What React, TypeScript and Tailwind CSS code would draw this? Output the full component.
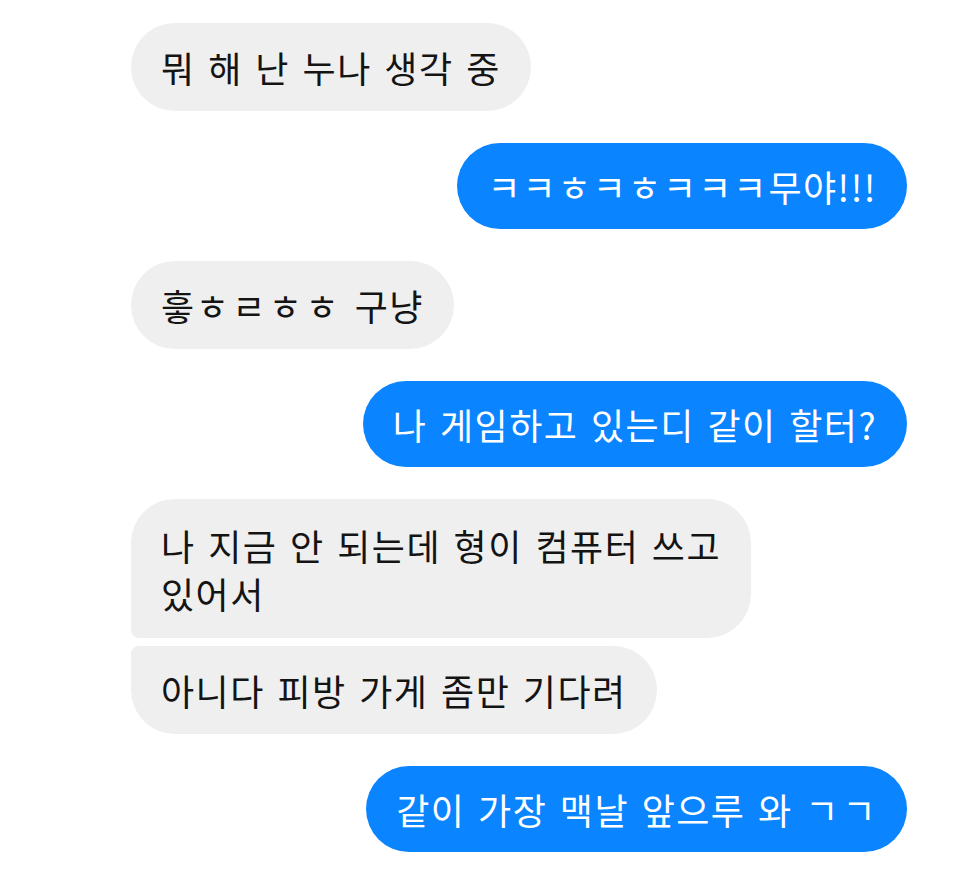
import React from "react";

type Msg = { text: React.ReactNode; me: boolean; shape?: string; pad?: string; gap?: string };

const J = ({ children, t }: { children: React.ReactNode; t: string }) => <span className={t}>{children}</span>;

const msgs: Msg[] = [
  { text: "뭐 해 난 누나 생각 중", me: false, gap: "mt-0" },
  {
    text: (
      <>
        <J t="tracking-[2px]">ㅋㅋㅎㅋㅎㅋㅋㅋ</J>무야!!!
      </>
    ),
    me: true,
    gap: "mt-[32px]",
  },
  {
    text: (
      <>
        흫<J t="tracking-[3.5px]">ㅎㄹㅎㅎ</J> 구냥
      </>
    ),
    me: false,
    gap: "mt-[32px]",
  },
  { text: "나 게임하고 있는디 같이 할터?", me: true, gap: "mt-[32px]" },
  {
    text: (
      <>
        나 지금 안 되는데 형이 컴퓨터 쓰고
        <br />
        있어서
      </>
    ),
    me: false,
    shape: "rounded-tl-[44px] rounded-tr-[44px] rounded-br-[44px] rounded-bl-[8px]",
    pad: "pt-[22px] pb-[21px]",
    gap: "mt-[32px]",
  },
  {
    text: "아니다 피방 가게 좀만 기다려",
    me: false,
    shape: "rounded-tl-[8px] rounded-tr-[44px] rounded-br-[44px] rounded-bl-[44px]",
    gap: "mt-[8px]",
  },
  {
    text: (
      <>
        같이 가장 맥날 앞으루 와 <J t="tracking-[4px]">ㄱ</J>ㄱ
      </>
    ),
    me: true,
    gap: "mt-[32px]",
  },
];

export default function App() {
  return (
    <div
      className="w-[960px] h-[878px] bg-white overflow-hidden pt-[23px] pl-[131px] pr-[53px] flex flex-col"
      style={{ fontFamily: '"Noto Sans CJK KR", "Noto Sans", sans-serif' }}
    >
      {msgs.map((m, i) => (
        <div
          key={i}
          className={`${m.gap} ${m.me ? "self-end bg-[#0a84ff] text-white" : "self-start bg-[#efefef] text-[#141414]"} ${
            m.shape ?? "rounded-[44px]"
          } ${m.pad ?? (m.me ? "py-[19px]" : "py-[20px]")} px-[30px] text-[36px] leading-[48px] tracking-[1.5px] [word-spacing:3px] whitespace-nowrap`}
        >
          {m.text}
        </div>
      ))}
    </div>
  );
}
